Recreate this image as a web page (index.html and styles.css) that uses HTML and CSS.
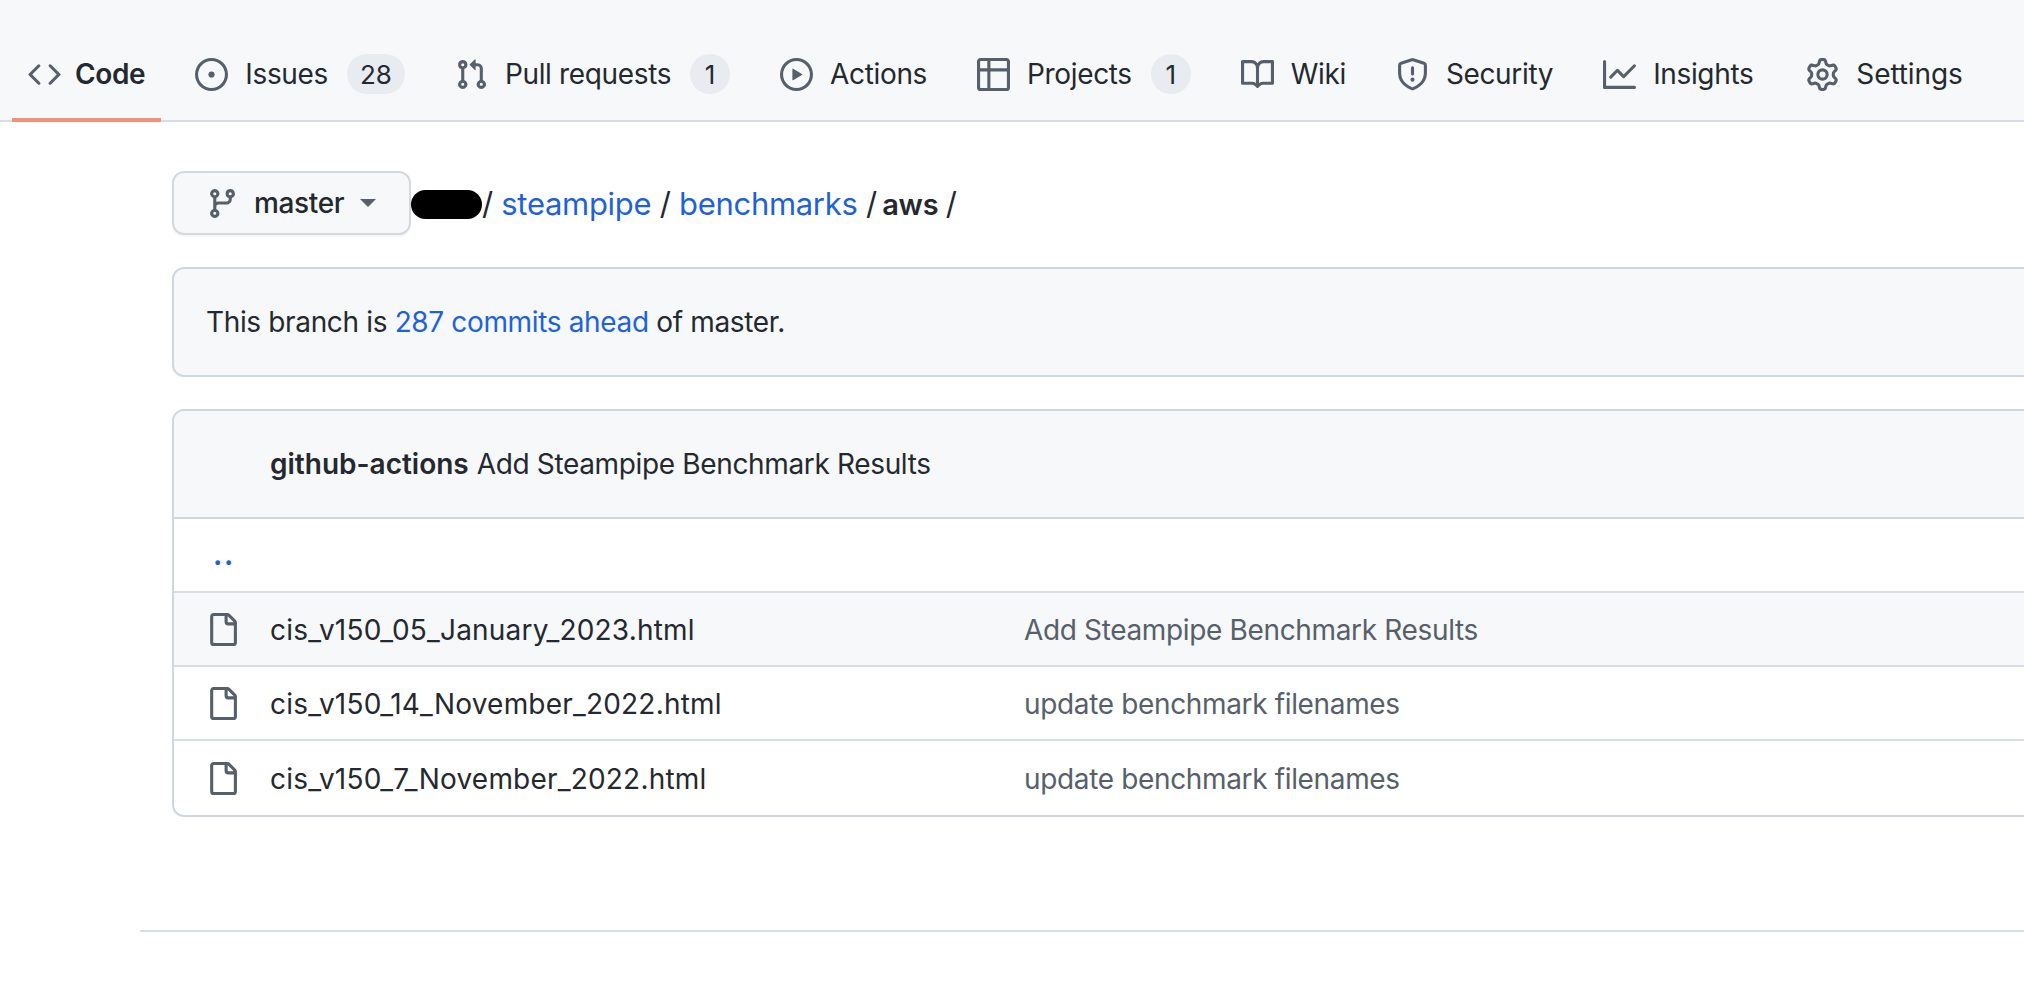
FILE: index.html
```html
<!DOCTYPE html>
<html lang="en">
<head>
<meta charset="utf-8">
<title>benchmarks/aws</title>
<link rel="stylesheet" href="styles.css">
</head>
<body>
<svg class="defs" aria-hidden="true">
  <symbol id="i-code" viewBox="0 0 16 16"><path d="m11.28 3.22 4.25 4.25a.75.75 0 0 1 0 1.06l-4.25 4.25a.749.749 0 0 1-1.275-.326.749.749 0 0 1 .215-.734L13.94 8l-3.72-3.72a.749.749 0 0 1 .326-1.275.749.749 0 0 1 .734.215Zm-6.56 0a.751.751 0 0 1 1.042.018.751.751 0 0 1 .018 1.042L2.06 8l3.72 3.72a.749.749 0 0 1-.326 1.275.749.749 0 0 1-.734-.215L.47 8.53a.75.75 0 0 1 0-1.06Z"/></symbol>
  <symbol id="i-issue" viewBox="0 0 16 16"><path d="M8 9.5a1.5 1.5 0 1 0 0-3 1.5 1.5 0 0 0 0 3Z"/><path d="M8 0a8 8 0 1 1 0 16A8 8 0 0 1 8 0ZM1.5 8a6.5 6.5 0 1 0 13 0 6.5 6.5 0 0 0-13 0Z"/></symbol>
  <symbol id="i-pr" viewBox="0 0 16 16"><path d="M1.5 3.25a2.25 2.25 0 1 1 3 2.122v5.256a2.251 2.251 0 1 1-1.5 0V5.372A2.25 2.25 0 0 1 1.5 3.25Zm5.677-.177L9.573.677A.25.25 0 0 1 10 .854V2.5h1A2.5 2.5 0 0 1 13.5 5v5.628a2.251 2.251 0 1 1-1.5 0V5a1 1 0 0 0-1-1h-1v1.646a.25.25 0 0 1-.427.177L7.177 3.427a.25.25 0 0 1 0-.354ZM3.75 2.5a.75.75 0 1 0 0 1.5.75.75 0 0 0 0-1.5Zm0 9.5a.75.75 0 1 0 0 1.5.75.75 0 0 0 0-1.5Zm8.25.75a.75.75 0 1 0 1.5 0 .75.75 0 0 0-1.5 0Z"/></symbol>
  <symbol id="i-play" viewBox="0 0 16 16"><path d="M8 0a8 8 0 1 1 0 16A8 8 0 0 1 8 0ZM1.5 8a6.5 6.5 0 1 0 13 0 6.5 6.5 0 0 0-13 0Zm4.879-2.773 4.264 2.559a.25.25 0 0 1 0 .428l-4.264 2.559A.25.25 0 0 1 6 10.559V5.442a.25.25 0 0 1 .379-.215Z"/></symbol>
  <symbol id="i-table" viewBox="0 0 16 16"><path d="M0 1.75C0 .784.784 0 1.75 0h12.5C15.216 0 16 .784 16 1.75v12.5A1.75 1.75 0 0 1 14.25 16H1.75A1.75 1.75 0 0 1 0 14.25ZM6.5 6.5v8h7.75a.25.25 0 0 0 .25-.25V6.5Zm8-1.5V1.75a.25.25 0 0 0-.25-.25H6.5V5Zm-13 1.5v7.75c0 .138.112.25.25.25H5v-8ZM5 5V1.5H1.75a.25.25 0 0 0-.25.25V5Z"/></symbol>
  <symbol id="i-book" viewBox="0 0 16 16"><path d="M0 1.75A.75.75 0 0 1 .75 1h4.253c1.227 0 2.317.59 3 1.501A3.743 3.743 0 0 1 11.006 1h4.245a.75.75 0 0 1 .75.75v10.5a.75.75 0 0 1-.75.75h-4.507a2.25 2.25 0 0 0-1.591.659l-.622.621a.75.75 0 0 1-1.06 0l-.622-.621A2.25 2.25 0 0 0 5.258 13H.75a.75.75 0 0 1-.75-.75Zm7.251 10.324.004-5.073-.002-2.253A2.25 2.25 0 0 0 5.003 2.5H1.5v9h3.757a3.75 3.75 0 0 1 1.994.574ZM8.755 4.75l-.004 7.322a3.752 3.752 0 0 1 1.992-.572H14.5v-9h-3.495a2.25 2.25 0 0 0-2.25 2.25Z"/></symbol>
  <symbol id="i-shield" viewBox="0 0 16 16"><path d="M7.467.133a1.748 1.748 0 0 1 1.066 0l5.25 1.68A1.75 1.75 0 0 1 15 3.48V7c0 1.566-.32 3.182-1.303 4.682-.983 1.498-2.585 2.813-5.032 3.855a1.697 1.697 0 0 1-1.33 0c-2.447-1.042-4.049-2.357-5.032-3.855C1.32 10.182 1 8.566 1 7V3.48a1.75 1.75 0 0 1 1.217-1.667Zm.61 1.429a.25.25 0 0 0-.153 0l-5.25 1.68a.25.25 0 0 0-.174.238V7c0 1.358.275 2.666 1.057 3.86.784 1.194 2.121 2.34 4.366 3.297a.196.196 0 0 0 .154 0c2.245-.956 3.582-2.104 4.366-3.298C13.225 9.666 13.5 8.36 13.5 7V3.48a.251.251 0 0 0-.174-.237l-5.25-1.68ZM8.75 4.75v3a.75.75 0 0 1-1.5 0v-3a.75.75 0 0 1 1.5 0ZM9 10.5a1 1 0 1 1-2 0 1 1 0 0 1 2 0Z"/></symbol>
  <symbol id="i-graph" viewBox="0 0 16 16"><path d="M1.5 1.75V13.5h13.75a.75.75 0 0 1 0 1.5H.75a.75.75 0 0 1-.75-.75V1.75a.75.75 0 0 1 1.5 0Zm14.28 2.53-5.25 5.25a.75.75 0 0 1-1.06 0L7 7.06 4.28 9.78a.751.751 0 0 1-1.042-.018.751.751 0 0 1-.018-1.042l3.25-3.25a.75.75 0 0 1 1.06 0L10 7.94l4.72-4.72a.751.751 0 0 1 1.042.018.751.751 0 0 1 .018 1.042Z"/></symbol>
  <symbol id="i-gear" viewBox="0 0 16 16"><path d="M8 0a8.2 8.2 0 0 1 .701.031C9.444.095 9.99.645 10.16 1.29l.288 1.107c.018.066.079.158.212.224.231.114.454.243.668.386.123.082.233.09.299.071l1.103-.303c.644-.176 1.392.021 1.82.63.27.385.506.792.704 1.218.315.675.111 1.422-.364 1.891l-.814.806c-.049.048-.098.147-.088.294.016.257.016.515 0 .772-.01.147.038.246.088.294l.814.806c.475.469.679 1.216.364 1.891a7.977 7.977 0 0 1-.704 1.217c-.428.61-1.176.807-1.82.63l-1.102-.302c-.067-.019-.177-.011-.3.071a5.909 5.909 0 0 1-.668.386c-.133.066-.194.158-.211.224l-.29 1.106c-.168.646-.715 1.196-1.458 1.26a8.006 8.006 0 0 1-1.402 0c-.743-.064-1.289-.614-1.458-1.26l-.289-1.106c-.018-.066-.079-.158-.212-.224a5.738 5.738 0 0 1-.668-.386c-.123-.082-.233-.09-.299-.071l-1.103.303c-.644.176-1.392-.021-1.82-.63a8.12 8.12 0 0 1-.704-1.218c-.315-.675-.111-1.422.363-1.891l.815-.806c.05-.048.098-.147.088-.294a6.214 6.214 0 0 1 0-.772c.01-.147-.038-.246-.088-.294l-.815-.806C.635 6.045.431 5.298.746 4.623a7.92 7.92 0 0 1 .704-1.217c.428-.61 1.176-.807 1.82-.63l1.102.302c.067.019.177.011.3-.071.214-.143.437-.272.668-.386.133-.066.194-.158.211-.224l.29-1.106C6.009.645 6.556.095 7.299.03 7.53.01 7.764 0 8 0Zm-.571 1.525c-.036.003-.108.036-.137.146l-.289 1.105c-.147.561-.549.967-.998 1.189-.173.086-.34.183-.5.29-.417.278-.97.423-1.529.27l-1.103-.303c-.109-.03-.175.016-.195.045-.22.312-.412.644-.573.99-.014.031-.021.11.059.19l.815.806c.411.406.562.957.53 1.456a4.709 4.709 0 0 0 0 .582c.032.499-.119 1.05-.53 1.456l-.815.806c-.081.08-.073.159-.059.19.162.346.353.677.573.989.02.03.085.076.195.046l1.102-.303c.56-.153 1.113-.008 1.53.27.161.107.328.204.501.29.447.222.85.629.997 1.189l.289 1.105c.029.109.101.143.137.146a6.6 6.6 0 0 0 1.142 0c.036-.003.108-.036.137-.146l.289-1.105c.147-.561.549-.967.998-1.189.173-.086.34-.183.5-.29.417-.278.97-.423 1.529-.27l1.103.303c.109.029.175-.016.195-.045.22-.313.411-.644.573-.99.014-.031.021-.11-.059-.19l-.815-.806c-.411-.406-.562-.957-.53-1.456a4.709 4.709 0 0 0 0-.582c-.032-.499.119-1.05.53-1.456l.815-.806c.081-.08.073-.159.059-.19a6.464 6.464 0 0 0-.573-.989c-.02-.03-.085-.076-.195-.046l-1.102.303c-.56.153-1.113.008-1.53-.27a4.44 4.44 0 0 0-.501-.29c-.447-.222-.85-.629-.997-1.189l-.289-1.105c-.029-.11-.101-.143-.137-.146a6.6 6.6 0 0 0-1.142 0ZM11 8a3 3 0 1 1-6 0 3 3 0 0 1 6 0ZM9.5 8a1.5 1.5 0 1 0-3.001.001A1.5 1.5 0 0 0 9.5 8Z"/></symbol>
  <symbol id="i-branch" viewBox="0 0 16 16"><path d="M9.5 3.25a2.25 2.25 0 1 1 3 2.122V6A2.5 2.5 0 0 1 10 8.5H6a1 1 0 0 0-1 1v1.128a2.251 2.251 0 1 1-1.5 0V5.372a2.25 2.25 0 1 1 1.5 0v1.836A2.493 2.493 0 0 1 6 7h4a1 1 0 0 0 1-1v-.628A2.25 2.25 0 0 1 9.5 3.25Zm-6 0a.75.75 0 1 0 1.5 0 .75.75 0 0 0-1.5 0Zm8.25-.75a.75.75 0 1 0 0 1.5.75.75 0 0 0 0-1.5ZM4.25 12a.75.75 0 1 0 0 1.5.75.75 0 0 0 0-1.5Z"/></symbol>
  <symbol id="i-file" viewBox="0 0 16 16"><path d="M2 1.75C2 .784 2.784 0 3.75 0h6.586c.464 0 .909.184 1.237.513l2.914 2.914c.329.328.513.773.513 1.237v9.586A1.75 1.75 0 0 1 13.25 16h-9.5A1.75 1.75 0 0 1 2 14.25Zm1.75-.25a.25.25 0 0 0-.25.25v12.5c0 .138.112.25.25.25h9.5a.25.25 0 0 0 .25-.25V6h-2.75A1.75 1.75 0 0 1 9 4.25V1.5Zm6.75.062V4.25c0 .138.112.25.25.25h2.688l-.011-.013-2.914-2.914-.013-.011Z"/></symbol>
</svg>

<nav class="tabs">
  <a class="tab tab-active"><svg class="icon"><use href="#i-code"/></svg><span class="tab-label">Code</span></a>
  <a class="tab"><svg class="icon"><use href="#i-issue"/></svg><span>Issues</span><span class="counter">28</span></a>
  <a class="tab"><svg class="icon"><use href="#i-pr"/></svg><span>Pull requests</span><span class="counter">1</span></a>
  <a class="tab"><svg class="icon"><use href="#i-play"/></svg><span>Actions</span></a>
  <a class="tab"><svg class="icon"><use href="#i-table"/></svg><span>Projects</span><span class="counter">1</span></a>
  <a class="tab"><svg class="icon"><use href="#i-book"/></svg><span>Wiki</span></a>
  <a class="tab"><svg class="icon"><use href="#i-shield"/></svg><span>Security</span></a>
  <a class="tab"><svg class="icon"><use href="#i-graph"/></svg><span>Insights</span></a>
  <a class="tab tab-settings"><svg class="icon"><use href="#i-gear"/></svg><span>Settings</span></a>
</nav>

<main class="content">
  <div class="crumbs">
    <button class="branch-btn"><svg class="icon"><use href="#i-branch"/></svg><span class="branch-name">master</span><span class="caret"></span></button>
    <span class="redact"></span>
    <div class="path">/ <a class="link">steampipe</a> / <a class="link">benchmarks</a> / <strong>aws</strong> /</div>
  </div>

  <div class="notice">This branch is <a class="link">287 commits ahead</a> of master.</div>

  <section class="files">
    <header class="commit"><strong>github-actions</strong> Add Steampipe Benchmark Results</header>
    <div class="row row-up"><a class="link up">. .</a></div>
    <div class="row row-hover"><svg class="icon"><use href="#i-file"/></svg><span class="name">cis_v150_05_January_2023.html</span><span class="msg">Add Steampipe Benchmark Results</span></div>
    <div class="row"><svg class="icon"><use href="#i-file"/></svg><span class="name">cis_v150_14_November_2022.html</span><span class="msg">update benchmark filenames</span></div>
    <div class="row"><svg class="icon"><use href="#i-file"/></svg><span class="name">cis_v150_7_November_2022.html</span><span class="msg">update benchmark filenames</span></div>
  </section>

  <hr class="rule">
</main>
</body>
</html>
```
FILE: styles.css
```css
* { box-sizing: border-box; }
html, body { margin: 0; padding: 0; height: 100%; overflow: hidden; background: #fff; }
body { font-family: Inter, "Liberation Sans", sans-serif; font-size: 28px; letter-spacing: -.35px; color: #24292f; }
.defs { display: none; }
.icon { width: 33px; height: 33px; fill: #57606a; flex: none; display: block; }
.link { color: #1f62d8; }

.tabs { display: flex; align-items: stretch; gap: 18px; height: 122px; padding: 0 0 0 12px; background: #f6f8fa; border-bottom: 2px solid #d8dee4; }
.tab { display: flex; align-items: center; gap: 17px; height: 122px; padding: 30px 16px 0; border-bottom: 4px solid transparent; white-space: nowrap; }
.tab-active { font-weight: 600; border-bottom-color: #f4917a; }
.tab-label { margin-left: -3px; }
.tab-settings { margin-left: 3px; letter-spacing: -.1px; }
.counter { display: flex; align-items: center; justify-content: center; min-width: 40px; height: 40px; padding: 0 13px; margin-left: 2px; border-radius: 20px; background: #e8ebef; font-size: 26px; font-weight: 400; letter-spacing: 0; }

.content { padding: 49px 0 0 172px; width: 2200px; }
.crumbs { display: flex; align-items: center; }
.branch-btn { display: flex; align-items: center; width: 239px; height: 64px; padding: 0 0 0 32px; background: #f6f8fa; border: 2px solid #d5d9de; border-radius: 12px; box-shadow: 0 2px 0 rgba(31,35,40,.04); font: inherit; letter-spacing: -.35px; color: #24292f; }
.branch-name { margin-left: 15px; font-weight: 500; }
.caret { margin-left: 16px; border: 8px solid transparent; border-top-color: #57606a; border-bottom-width: 0; }
.redact { width: 71px; height: 29px; margin-top: 2px; border-radius: 15px; background: #000; }
.path { font-size: 31px; letter-spacing: -.3px; white-space: pre; }
.path strong { font-weight: 600; font-size: 29px; margin: 0 -1px 0 -3px; }
.notice { height: 110px; margin-top: 32px; padding: 0 32px; line-height: 106px; background: #f6f8fa; border: 2px solid #d0d7de; border-radius: 12px; }

.files { margin-top: 32px; border: 2px solid #d0d7de; border-radius: 12px; overflow: hidden; }
.commit { height: 108px; padding: 0 0 0 96px; display: flex; align-items: center; gap: 8px; background: #f6f8fa; border-bottom: 2px solid #d0d7de; }
.commit strong { font-weight: 600; letter-spacing: 0; }
.row { display: flex; align-items: center; height: 74px; padding-left: 32px; border-bottom: 2px solid #d8dee4; }
.row:last-child { border-bottom: 0; }
.row-hover { background: #f6f8fa; }
.up { margin-left: 7px; letter-spacing: -2px; font-weight: 700; }
.name { margin: 2px 0 0 31px; width: 754px; letter-spacing: .2px; }
.msg { margin-top: 2px; color: #57606a; }
.rule { margin: 113px 0 0 -32px; border: 0; border-top: 2px solid #d8dee4; }
```
